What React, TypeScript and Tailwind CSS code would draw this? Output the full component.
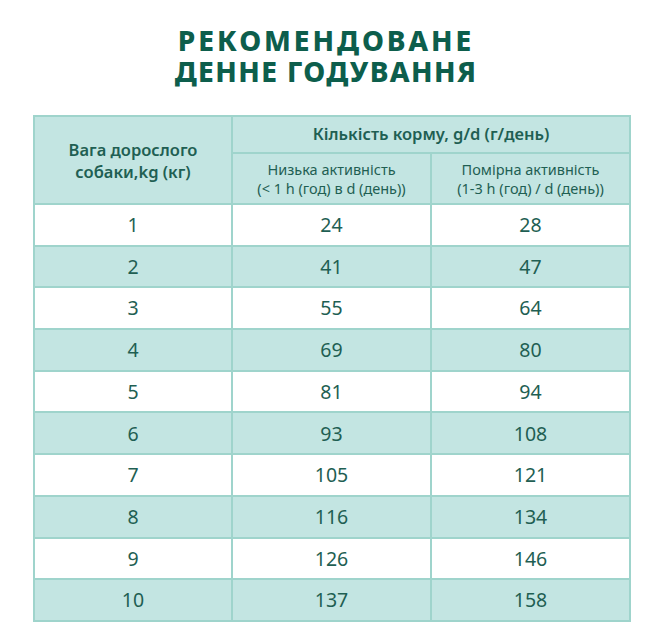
import React from "react";

const rows: [number, number, number][] = [
  [1, 24, 28],
  [2, 41, 47],
  [3, 55, 64],
  [4, 69, 80],
  [5, 81, 94],
  [6, 93, 108],
  [7, 105, 121],
  [8, 116, 134],
  [9, 126, 146],
  [10, 137, 158],
];

export default function App() {
  return (
    <div
      className="w-[646px] h-[634px] bg-white flex flex-col"
      style={{ fontFamily: '"Noto Sans", "Open Sans", sans-serif' }}
    >
      <h1 className="mt-[25px] ml-[6px] flex flex-col items-center text-[28px] leading-[31px] font-extrabold text-[#0d5e4c]">
        <span className="tracking-[0.105em]">РЕКОМЕНДОВАНЕ</span>
        <span className="tracking-[0.05em]">ДЕННЕ ГОДУВАННЯ</span>
      </h1>
      <table className="mt-[28px] ml-[33px] w-[596px] border-collapse border-2 border-[#9fd4cc] text-[#1f5f53] table-fixed">
        <colgroup>
          <col className="w-[198px]" />
          <col className="w-[199px]" />
          <col className="w-[199px]" />
        </colgroup>
        <thead>
          <tr className="bg-[#c3e5e2] h-[37px]">
            <th
              rowSpan={2}
              className="border-2 border-[#9fd4cc] text-[16.5px] leading-[22px] font-semibold pt-[2px]"
            >
              Вага дорослого
              <br />
              собаки,kg (кг)
            </th>
            <th
              colSpan={2}
              className="border-2 border-[#9fd4cc] text-[16.5px] font-semibold"
            >
              Кількість корму, g/d (г/день)
            </th>
          </tr>
          <tr className="bg-[#c3e5e2] h-[51px]">
            <th className="border-2 border-[#9fd4cc] text-[14.5px] leading-[19px] font-normal">
              Низька активність
              <br />
              (&lt; 1 h (год) в d (день))
            </th>
            <th className="border-2 border-[#9fd4cc] text-[14.5px] leading-[19px] font-normal">
              Помірна активність
              <br />
              (1-3 h (год) / d (день))
            </th>
          </tr>
        </thead>
        <tbody>
          {rows.map(([w, a, b], i) => (
            <tr
              key={w}
              className={`h-[41.7px] ${i % 2 === 1 ? "bg-[#c3e5e2]" : "bg-white"}`}
            >
              <td className="border-2 border-[#9fd4cc] text-center text-[19.5px] leading-none">{w}</td>
              <td className="border-2 border-[#9fd4cc] text-center text-[19.5px] leading-none">{a}</td>
              <td className="border-2 border-[#9fd4cc] text-center text-[19.5px] leading-none">{b}</td>
            </tr>
          ))}
        </tbody>
      </table>
    </div>
  );
}
